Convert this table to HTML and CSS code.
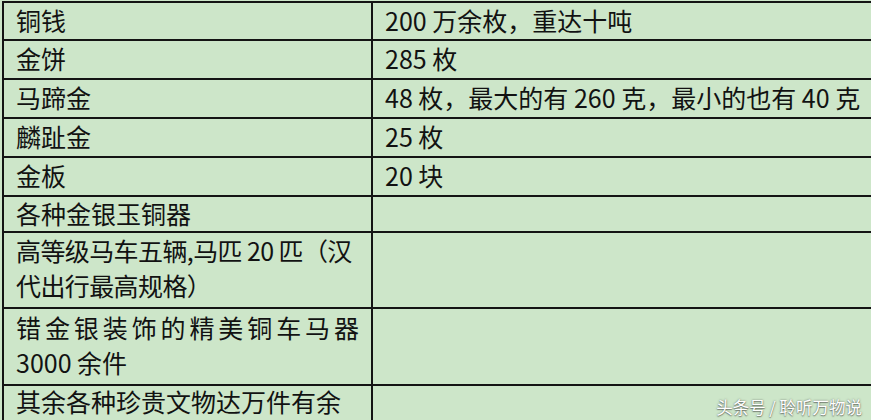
FILE: index.html
```html
<!DOCTYPE html>
<html lang="zh-CN">
<head>
<meta charset="utf-8">
<title>墓葬出土文物</title>
<link rel="stylesheet" href="styles.css">
</head>
<body>
<div class="sheet">
  <div class="cell r1">铜钱</div><div class="cell r1 val">200 万余枚，重达十吨</div>
  <div class="cell r2">金饼</div><div class="cell r2 val">285 枚</div>
  <div class="cell r3">马蹄金</div><div class="cell r3 val">48 枚，最大的有 260 克，最小的也有 40 克</div>
  <div class="cell r4">麟趾金</div><div class="cell r4 val">25 枚</div>
  <div class="cell r5">金板</div><div class="cell r5 val">20 块</div>
  <div class="cell r6">各种金银玉铜器</div><div class="cell r6 val"></div>
  <div class="cell r7 multi"><p class="tight">高等级马车五辆,马匹 20 匹（汉<br>代出行最高规格）</p></div><div class="cell r7 val"></div>
  <div class="cell r8 multi"><p>错金银装饰的精美铜车马器 3000 余件</p></div><div class="cell r8 val"></div>
  <div class="cell r9">其余各种珍贵文物达万件有余</div><div class="cell r9 val"></div>
</div>
<div class="mark">头条号 / 聆听万物说</div>
</body>
</html>
```
FILE: styles.css
```css
html, body {
  margin: 0;
  padding: 0;
  background: #cde6c9;
  overflow: hidden;
  width: 871px;
  height: 420px;
}
body {
  position: relative;
  font-family: "Noto Sans CJK SC", "Noto Sans", sans-serif;
  color: #121212;
}
.sheet {
  display: grid;
  grid-template-columns: 369px 1fr;
  grid-template-rows: 38px 39px 39px 39px 39px 36px 76px 77px 34px;
  width: 900px;
  margin: 1px 0 0 2px;
  border-top: 2px solid #141414;
  border-left: 2px solid #141414;
  background: #cde6c9;
}
.cell {
  box-sizing: border-box;
  border-right: 2px solid #141414;
  border-bottom: 2px solid #141414;
  padding: 0 12px 3px;
  font-size: 25px;
  line-height: 30px;
  display: flex;
  align-items: center;
  white-space: nowrap;
}
.cell.r9 {
  align-items: flex-start;
  padding: 0 12px;
  border-bottom: 0;
}
.cell.multi {
  white-space: normal;
  padding-bottom: 4px;
}
.cell.multi p {
  margin: 0;
  width: 100%;
  line-height: 35px;
  text-align: justify;
  text-align-last: left;
}
.cell.multi p.tight {
  white-space: nowrap;
  text-align: left;
  letter-spacing: -0.6px;
}
.mark {
  position: absolute;
  right: 9px;
  bottom: 3px;
  font-size: 16.5px;
  line-height: 20px;
  color: #ffffff;
  text-shadow: 0 0 2px rgba(60, 60, 60, 0.7), 0 1px 1px rgba(60, 60, 60, 0.5);
}
```
